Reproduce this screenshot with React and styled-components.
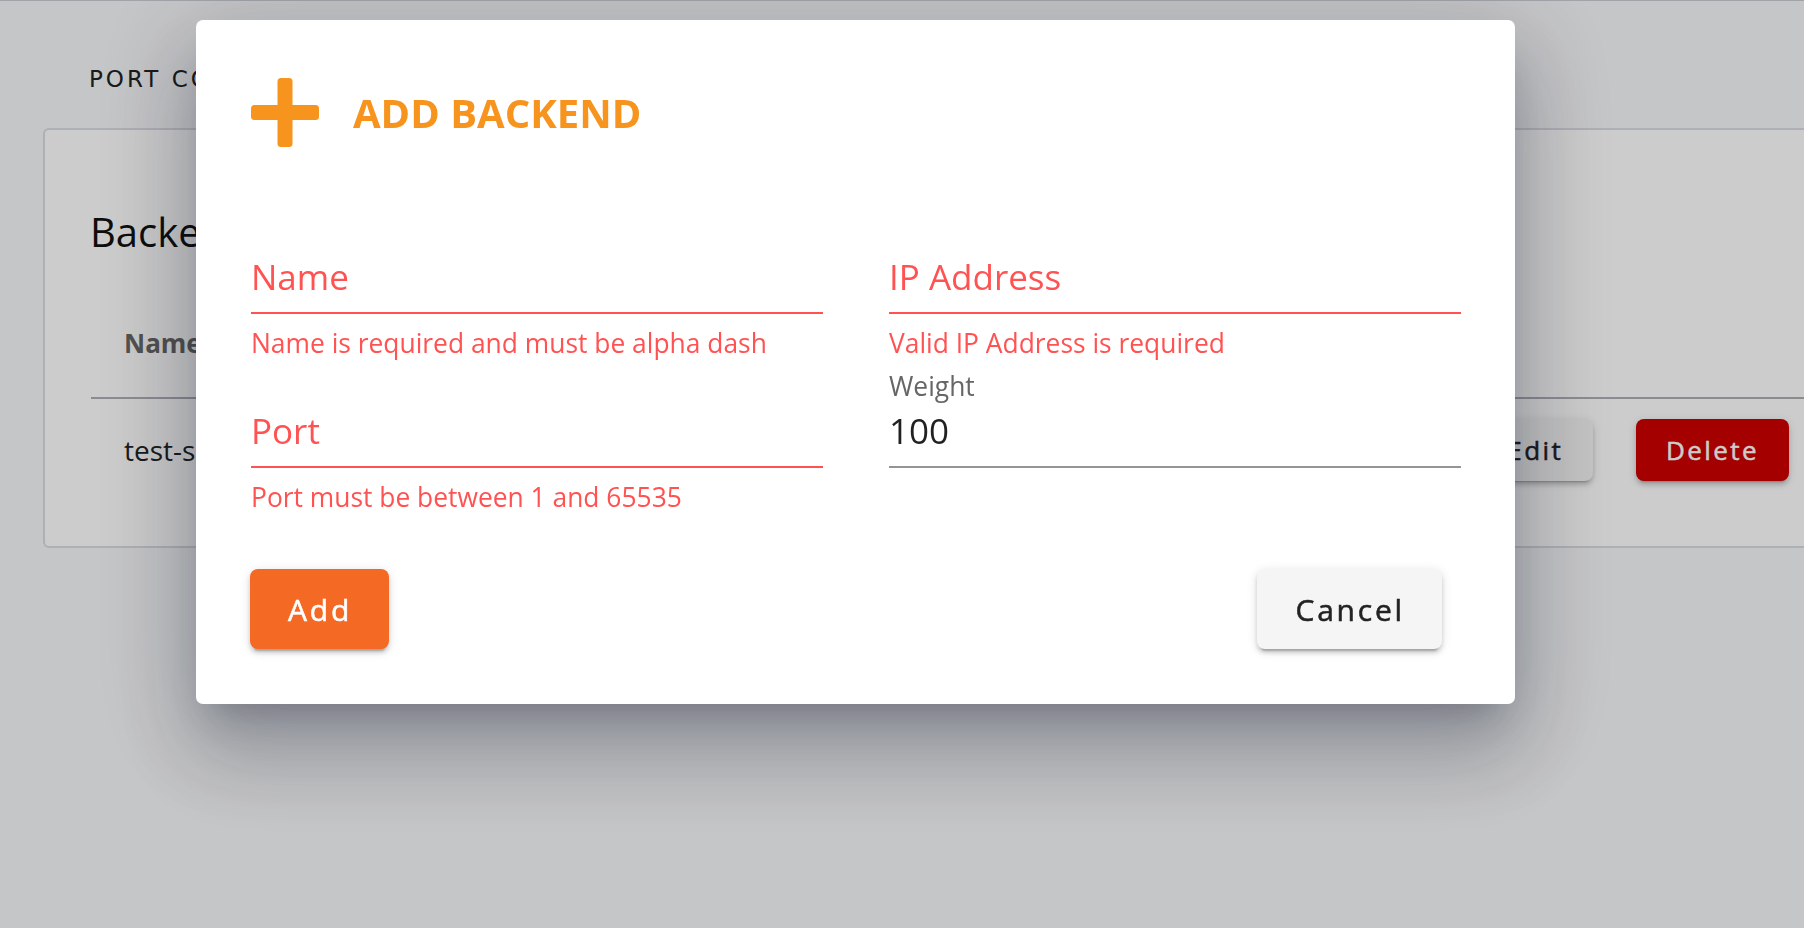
import React from 'react';
import styled, { createGlobalStyle } from 'styled-components';

const GlobalStyle = createGlobalStyle`
  html, body {
    margin: 0;
    padding: 0;
  }

  body {
    width: 1804px;
    height: 928px;
    overflow: hidden;
    background: #f7f8fa;
    font-family: "Open Sans", "Liberation Sans", sans-serif;
    color: #212121;
  }

  * {
    box-sizing: border-box;
  }
`;

const Page = styled.div`
    border-top: 1px solid #c9cdd3;
    padding: 63px 0 0 43px;
`;

const PageTitle = styled.h1`
    margin: 0 0 34px 46px;
    font-family: "DejaVu Sans", sans-serif;
    font-size: 23px;
    font-weight: 500;
    letter-spacing: 3px;
    line-height: 30px;
    color: #222;
`;

const Card = styled.section`
    width: 1829px;
    background: #ffffff;
    border: 2px solid #d9dce1;
    border-radius: 6px;
    padding: 77px 46px 45px;
`;

const CardTitle = styled.h2`
    margin: 0 0 0 -1px;
    font-size: 40px;
    font-weight: 400;
    line-height: 49px;
    color: #111;
`;

const TableRow = styled.div`
    display: grid;
    grid-template-columns: 330px 1fr auto;
    align-items: center;
    padding: ${props => props.$head ? '70px 0 37px' : '20px 0'};
    border-bottom: ${props => props.$head ? '2px solid #adb0b5' : 'none'};
`;

const Cell = styled.div`
    padding: 0 33px;
    font-size: ${props => props.$head ? '26px' : '28px'};
    font-weight: ${props => props.$head ? 700 : 400};
    line-height: ${props => props.$head ? '34px' : '62px'};
    color: ${props => props.$head ? '#666' : '#222'};
    white-space: nowrap;
`;

const ActionCell = styled.div`
    display: flex;
    justify-content: flex-end;
    gap: 43px;
    padding: 0 35px;
`;

const RowButton = styled.button`
    height: 62px;
    padding: 0 30px;
    border: none;
    border-radius: 8px;
    font-family: "Open Sans", sans-serif;
    font-size: 26px;
    font-weight: 400;
    -webkit-text-stroke: 0.5px currentColor;
    letter-spacing: 2.4px;
    background: ${props => props.$danger ? '#ce0000' : '#f5f5f5'};
    color: ${props => props.$danger ? '#ffffff' : '#212121'};
    box-shadow: 0 5px 2px -4px rgba(0, 0, 0, 0.2), 0 4px 4px 0 rgba(0, 0, 0, 0.14), 0 2px 10px 0 rgba(0, 0, 0, 0.12);
`;

const Overlay = styled.div`
    position: fixed;
    inset: 0;
    background: rgba(0, 0, 0, 0.2);
    padding: 20px 0 0 196px;
`;

const Dialog = styled.div`
    width: 1319px;
    background: #ffffff;
    border-radius: 7px;
    padding: 58px 55px 55px;
    box-shadow: 0 24px 34px -16px rgba(20, 25, 45, 0.25),
        0 52px 84px 6px rgba(20, 25, 45, 0.18),
        0 20px 100px 18px rgba(20, 25, 45, 0.15);
`;

const DialogHeader = styled.div`
    display: flex;
    align-items: center;
    gap: 34px;
    height: 69px;
    margin-bottom: 68px;
`;

const DialogTitle = styled.h2`
    margin: 0;
    font-size: 40px;
    font-weight: 700;
    line-height: 1;
    color: #f7941e;
`;

const Form = styled.form`
    display: grid;
    grid-template-columns: 572px 572px;
    column-gap: 66px;
    row-gap: 9px;
`;

const Field = styled.div`
    display: flex;
    flex-direction: column;
`;

const SmallLabel = styled.label`
    height: 34px;
    font-size: 26.4px;
    line-height: 34px;
    color: #666;
`;

const InputSlot = styled.div`
    padding: 6px 0 13px;
    border-bottom: 2px solid ${props => props.$error ? '#ff5252' : '#949494'};
`;

const Input = styled.input`
    display: block;
    width: 100%;
    height: 44px;
    padding: 0;
    border: none;
    outline: none;
    background: transparent;
    font-family: "Open Sans", sans-serif;
    font-size: 35px;
    line-height: 44px;
    color: #212121;

    &::placeholder {
        color: #ff5252;
        opacity: 1;
    }
`;

const Helper = styled.div`
    margin-top: 12px;
    height: 34px;
    font-size: 26.4px;
    line-height: 34px;
    color: #ff5252;
`;

const Actions = styled.div`
    display: flex;
    justify-content: space-between;
    align-items: center;
    margin-top: 55px;
`;

const DialogButton = styled.button`
    height: 80px;
    padding: 0 37px 0 38px;
    margin-left: -1px;
    margin-right: ${props => props.$primary ? '0' : '18px'};
    border: none;
    border-radius: 8px;
    font-family: "Open Sans", sans-serif;
    font-size: 30px;
    font-weight: 400;
    -webkit-text-stroke: 0.55px currentColor;
    letter-spacing: 2.8px;
    background: ${props => props.$primary ? '#f46a25' : '#f5f5f5'};
    color: ${props => props.$primary ? '#ffffff' : '#222222'};
    box-shadow: 0 6px 2px -4px rgba(0, 0, 0, 0.2), 0 4px 4px 0 rgba(0, 0, 0, 0.14), 0 2px 11px 0 rgba(0, 0, 0, 0.12);
    cursor: pointer;
`;

const PlusIcon = () => (
    <svg width="68" height="69" viewBox="0 0 68 69" fill="#f7941e">
        <rect x="26.5" y="0" width="15" height="69" rx="3.5" />
        <rect x="0" y="27" width="68" height="15" rx="3.5" />
    </svg>
);

const TextField = ({ label, value, error, floating }) => (
    <Field>
        <SmallLabel>{floating ? label : ''}</SmallLabel>
        <InputSlot $error={!!error}>
            <Input
                type="text"
                placeholder={floating ? '' : label}
                defaultValue={value}
                readOnly
            />
        </InputSlot>
        <Helper>{error}</Helper>
    </Field>
);

const App = () => {
    return (
        <>
            <GlobalStyle />
            <Page>
                <PageTitle>PORT CONFIGURATION</PageTitle>
                <Card>
                    <CardTitle>Backends</CardTitle>
                    <TableRow $head>
                        <Cell $head>Name</Cell>
                        <Cell $head />
                        <Cell $head />
                    </TableRow>
                    <TableRow>
                        <Cell>test-server</Cell>
                        <Cell />
                        <ActionCell>
                            <RowButton>Edit</RowButton>
                            <RowButton $danger>Delete</RowButton>
                        </ActionCell>
                    </TableRow>
                </Card>
            </Page>

            <Overlay>
                <Dialog>
                    <DialogHeader>
                        <PlusIcon />
                        <DialogTitle>ADD BACKEND</DialogTitle>
                    </DialogHeader>
                    <Form onSubmit={e => e.preventDefault()}>
                        <TextField label="Name" error="Name is required and must be alpha dash" />
                        <TextField label="IP Address" error="Valid IP Address is required" />
                        <TextField label="Port" error="Port must be between 1 and 65535" />
                        <TextField label="Weight" value="100" floating />
                    </Form>
                    <Actions>
                        <DialogButton $primary type="button">Add</DialogButton>
                        <DialogButton type="button">Cancel</DialogButton>
                    </Actions>
                </Dialog>
            </Overlay>
        </>
    );
};

export default App;
